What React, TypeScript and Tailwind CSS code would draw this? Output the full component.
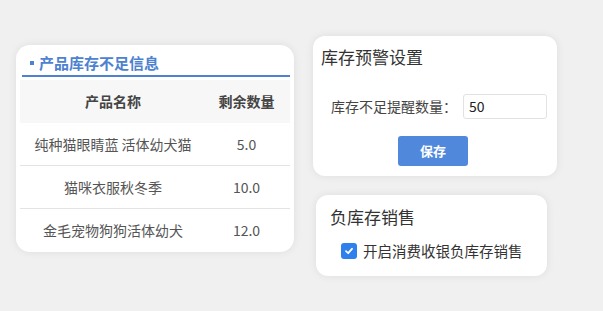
import React from "react";

export default function App() {
  const rows = [
    ["纯种猫眼睛蓝 活体幼犬猫", "5.0"],
    ["猫咪衣服秋冬季", "10.0"],
    ["金毛宠物狗狗活体幼犬", "12.0"],
  ];
  return (
    <div className="w-[603px] h-[311px] bg-[#f0f0f0] flex items-start font-['Noto_Sans_CJK_SC',sans-serif]">
      <div className="ml-[16px] mt-[45px] w-[278px] h-[207px] bg-white rounded-[14px] shadow-[0_0_8px_rgba(0,0,0,0.08)] flex flex-col pt-[7px] px-[4px]">
        <div className="ml-[2px] border-b-2 border-[#4d82d0] h-[26px] flex items-start pt-[2px] pl-[8px] gap-[5px]">
          <span className="w-[4px] h-[4px] bg-[#4d82d0] mt-[7px]" />
          <span className="text-[15px] font-bold text-[#4d82d0] leading-[18px]">产品库存不足信息</span>
        </div>
        <div className="mt-[3px] flex flex-col">
          <div className="h-[43px] bg-[#f7f7f7] flex items-center text-[14px] font-bold text-[#444]">
            <div className="w-[186px] text-center">产品名称</div>
            <div className="flex-1 text-center pr-[3px]">剩余数量</div>
          </div>
          {rows.map((r, i) => (
            <div
              key={i}
              className={`h-[43px] flex items-center text-[14px] text-[#555] ${i < rows.length - 1 ? "border-b border-[#e3e3e3]" : ""}`}
            >
              <div className="w-[186px] text-center">{r[0]}</div>
              <div className="flex-1 text-center pr-[3px]">{r[1]}</div>
            </div>
          ))}
        </div>
      </div>

      <div className="ml-[19px] mt-[36px] flex flex-col">
        <div className="w-[244px] h-[140px] bg-white rounded-[12px] shadow-[0_0_8px_rgba(0,0,0,0.08)] flex flex-col pt-[8px]">
          <div className="pl-[8px] text-[17px] text-[#333] leading-[26px]">库存预警设置</div>
          <div className="mt-[24px] flex items-center pl-[18px]">
            <span className="text-[14px] text-[#444]">库存不足提醒数量：</span>
            <div className="ml-[6px] w-[84px] h-[25px] border border-[#e2e2e2] rounded-[3px] flex items-center pl-[5px] text-[14px] text-[#222]">
              50
            </div>
          </div>
          <div className="mt-[17px] flex justify-center pr-[4px]">
            <button className="w-[70px] h-[30px] bg-[#5089dc] rounded-[3px] text-white text-[13px] font-bold">保存</button>
          </div>
        </div>

        <div className="ml-[3px] mt-[19px] w-[231px] h-[81px] bg-white rounded-[12px] shadow-[0_0_8px_rgba(0,0,0,0.08)] flex flex-col pt-[9px]">
          <div className="pl-[14px] text-[17px] text-[#333] leading-[26px]">负库存销售</div>
          <div className="mt-[10px] flex items-center pl-[25px] gap-[6px]">
            <span className="w-[16px] h-[16px] rounded-[3px] bg-[#2f80ed] flex items-center justify-center">
              <svg width="10" height="10" viewBox="0 0 10 10">
                <path d="M2 5.2 L4.2 7.2 L8 2.8" stroke="white" strokeWidth="1.8" fill="none" strokeLinecap="round" strokeLinejoin="round" />
              </svg>
            </span>
            <span className="text-[14.5px] text-[#333]">开启消费收银负库存销售</span>
          </div>
        </div>
      </div>
    </div>
  );
}
